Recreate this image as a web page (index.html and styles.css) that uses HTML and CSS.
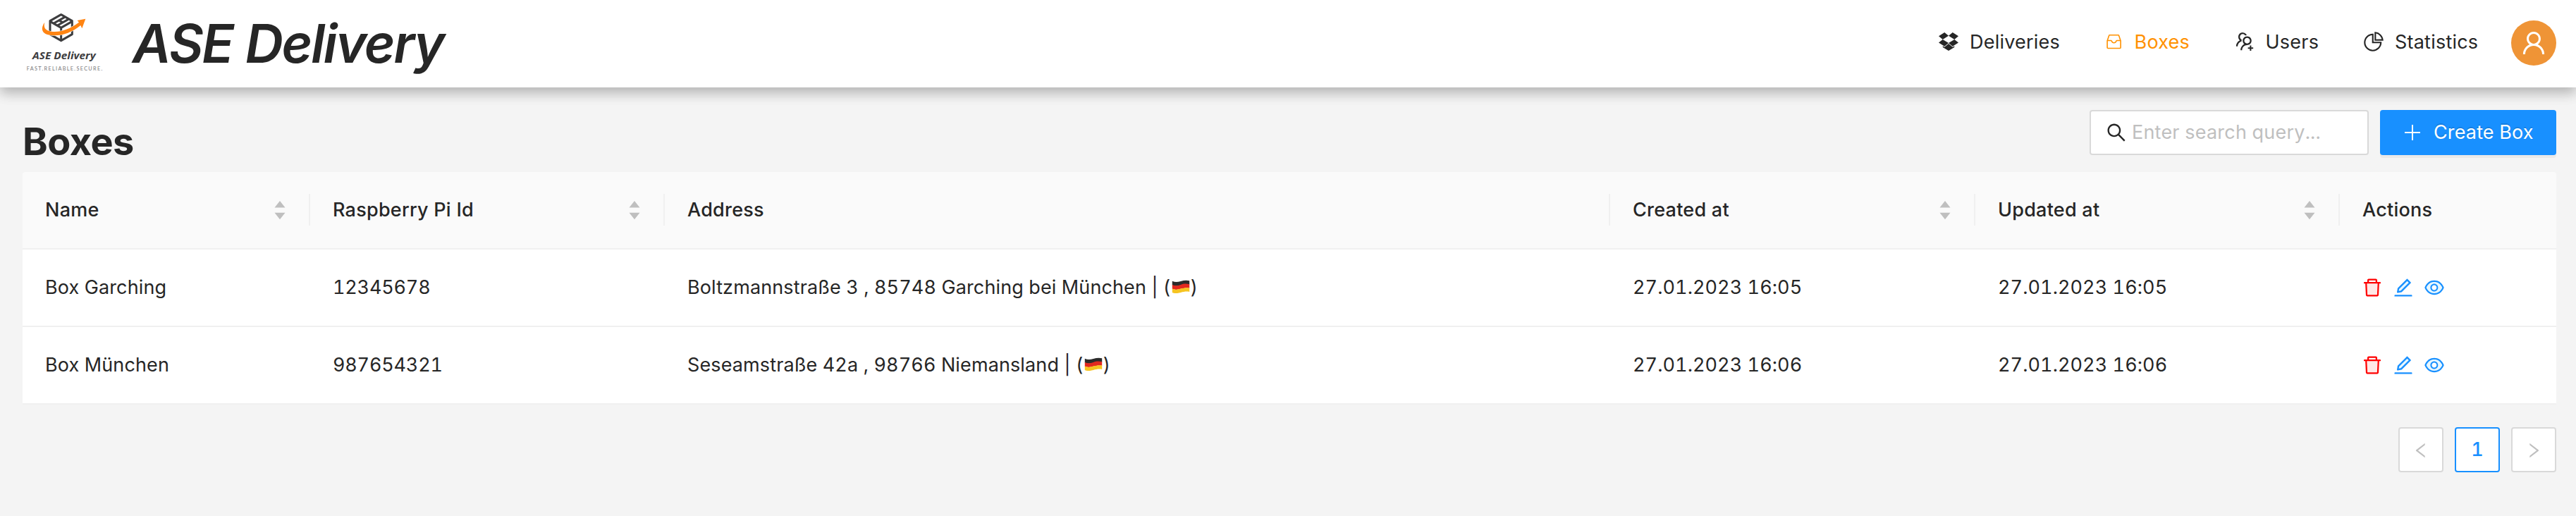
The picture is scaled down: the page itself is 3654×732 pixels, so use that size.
FILE: index.html
```
<!DOCTYPE html>
<html lang="en">
<head>
<meta charset="utf-8">
<title>ASE Delivery</title>
<link rel="stylesheet" href="styles.css">
</head>
<body>
<svg class="sprite" aria-hidden="true">
  <symbol id="i-dropbox" viewBox="64 64 896 896"><path d="M64 556.9l264.2 173.5L512.5 577 246.8 412.7zm896-290.3zm0 0L696.8 95 512.5 248.5l265.2 164.2L512.5 577l184.3 153.4L960 558.8 777.7 412.7zM513 609.8L328.2 763.3l-79.4-51.5v57.8L513 928l263.7-158.4v-57.8l-78.9 51.5zM328.2 95L64 265.1l182.8 147.6 265.7-164.2zM64 556.9z"/></symbol>
  <symbol id="i-inbox" viewBox="0 0 28 28"><path d="M8.500 4.700h12.200c.4 0 .8.3.9.7l2.500 7.400v9.700c0 .6-.4 1-1 1H6.100c-.6 0-1-.4-1-1v-9.700L7.600 5.400c.1-.4.5-.7.9-.7zM5.100 12.500h5.200c.5 0 .8.3 1 .7.500 1.400 1.700 2.500 3.300 2.500s2.800-1.100 3.300-2.500c.2-.4.5-.7 1-.7h5.200" fill="none" stroke="currentColor" stroke-width="1.600"/></symbol>
  <symbol id="i-users" viewBox="64 64 896 896"><path d="M892 772h-80v-80c0-4.400-3.600-8-8-8h-48c-4.400 0-8 3.600-8 8v80h-80c-4.400 0-8 3.600-8 8v48c0 4.400 3.600 8 8 8h80v80c0 4.400 3.600 8 8 8h48c4.400 0 8-3.600 8-8v-80h80c4.400 0 8-3.600 8-8v-48c0-4.400-3.600-8-8-8zM373.500 498.400c-.9-8.700-1.400-17.500-1.400-26.400 0-15.900 1.500-31.400 4.300-46.500.7-3.600-1.200-7.300-4.500-8.800-13.600-6.100-26.100-14.500-36.900-25.100a127.540 127.540 0 01-38.700-95.400c.9-32.100 13.800-62.600 36.300-85.600 24.700-25.300 57.900-39.100 93.200-38.700 31.900.3 62.700 12.600 86 34.400 7.900 7.400 14.700 15.600 20.400 24.400 2 3.100 5.900 4.400 9.300 3.200 17.600-6.100 36.200-10.400 55.300-12.400 5.600-.6 8.800-6.600 6.300-11.600-32.500-64.300-98.900-108.700-175.700-109.900-110.800-1.700-203.300 89.200-203.300 200 0 62.800 28.900 118.800 74.200 155.500-31.800 14.700-61.100 35-86.500 60.400-54.800 54.700-85.800 126.900-87.800 204a8 8 0 008 8.200h56.100c4.300 0 7.900-3.400 8-7.700 1.900-58 25.400-112.300 66.700-153.500 29.400-29.400 65.400-49.800 104.700-59.700 3.900-1 6.500-4.700 6-8.800zM824 472c0-109.400-87.900-198.300-196.900-200C516.300 270.300 424 361.200 424 472c0 62.800 29 118.800 74.200 155.500a300.950 300.950 0 00-86.400 60.400C357 742.600 326 814.800 324 891.800a8 8 0 008 8.200h56c4.300 0 7.900-3.400 8-7.700 1.900-58 25.400-112.300 66.700-153.500C505.800 695.700 563 672 624 672c110.400 0 200-89.500 200-200zm-109.500 90.500C690.300 586.700 658.200 600 624 600s-66.300-13.300-90.500-37.500a127.260 127.260 0 01-37.500-91.800c.3-32.800 13.400-64.500 36.300-88 24-24.600 56.100-38.300 90.400-38.700 33.900-.3 66.800 12.900 91 36.600 24.800 24.300 38.400 56.800 38.400 91.400-.1 34.200-13.400 66.300-37.600 90.500z"/></symbol>
  <symbol id="i-pie" viewBox="64 64 896 896"><path d="M864 518H506V160c0-4.400-3.600-8-8-8h-26a398.460 398.460 0 00-282.800 117.100 398.190 398.190 0 00-85.700 127.100A397.610 397.610 0 0072 552a398.460 398.460 0 00117.100 282.800c36.700 36.700 79.500 65.600 127.100 85.700A397.610 397.610 0 00472 952a398.460 398.460 0 00282.800-117.100c36.700-36.700 65.600-79.500 85.700-127.100A397.610 397.610 0 00872 552v-26c0-4.400-3.600-8-8-8zM705.700 787.800A331.590 331.590 0 01470.400 884c-88.100-.4-170.900-34.900-233.200-97.200C174.500 724.100 140 640.700 140 552c0-88.700 34.500-172.100 97.200-234.800 54.600-54.600 124.900-87.900 200.800-95.500V586h364.300c-7.700 76.300-41.300 147-96.600 201.800zM952 462.400l-2.600-28.200c-8.500-92.100-49.400-179-115.200-244.600A399.400 399.400 0 00589 74.600L560.700 72c-4.700-.4-8.700 3.200-8.700 7.900V464c0 4.400 3.600 8 8 8l384-1c4.700 0 8.400-4 8-8.600zm-332.200-58.200V147.600a332.240 332.240 0 01166.400 89.800c45.700 45.600 77 103.600 90 166.100l-256.400.7z"/></symbol>
  <symbol id="i-user" viewBox="64 64 896 896"><path d="M858.500 763.600a374 374 0 00-80.600-119.500 375.630 375.630 0 00-119.500-80.600c-.4-.2-.8-.3-1.200-.5C719.500 518 760 444.700 760 362c0-137-111-248-248-248S264 225 264 362c0 82.700 40.500 156 102.800 201.100-.4.2-.8.3-1.200.5-44.800 18.900-85 46-119.500 80.600a375.630 375.630 0 00-80.600 119.500A371.700 371.700 0 00136 901.800a8 8 0 008 8.200h60c4.400 0 7.900-3.500 8-7.800 2-77.200 33-149.500 87.800-204.300 56.700-56.700 132-87.900 212.200-87.900s155.500 31.200 212.200 87.900C779 752.700 810 825 812 902.200c.1 4.400 3.600 7.800 8 7.800h60a8 8 0 008-8.200c-1-47.800-10.900-94.300-29.500-138.200zM512 534c-45.900 0-89.100-17.900-121.600-50.400S340 407.900 340 362c0-45.900 17.900-89.100 50.400-121.600S466.100 190 512 190s89.100 17.900 121.600 50.400S684 316.100 684 362c0 45.900-17.900 89.100-50.400 121.600S557.900 534 512 534z"/></symbol>
  <symbol id="i-search" viewBox="64 64 896 896"><path d="M909.600 854.500L649.900 594.800C690.200 542.700 712 479 712 412c0-80.200-31.300-155.400-87.900-212.100-56.600-56.700-132-87.900-212.100-87.900s-155.500 31.300-212.100 87.900C143.200 256.500 112 331.800 112 412c0 80.100 31.300 155.500 87.900 212.100C256.500 680.800 331.800 712 412 712c67 0 130.600-21.800 182.700-62l259.700 259.600a8.200 8.200 0 0011.600 0l43.600-43.500a8.200 8.200 0 000-11.600zM570.400 570.400C528 612.700 471.800 636 412 636s-116-23.300-158.400-65.600C211.300 528 188 471.800 188 412s23.300-116.100 65.600-158.400C296 211.300 352.200 188 412 188s116.100 23.200 158.400 65.600S636 352.200 636 412s-23.300 116.100-65.600 158.400z"/></symbol>
  <symbol id="i-delete" viewBox="64 64 896 896"><path class="tone" d="M292.700 840h438.600l24.200-512h-487z"/><path d="M864 256H736v-80c0-35.300-28.700-64-64-64H352c-35.300 0-64 28.700-64 64v80H160c-17.700 0-32 14.300-32 32v32c0 4.400 3.600 8 8 8h60.400l24.700 523c1.600 34.100 29.800 61 63.900 61h454c34.200 0 62.300-26.800 63.900-61l24.700-523H888c4.400 0 8-3.600 8-8v-32c0-17.700-14.300-32-32-32zm-504-72h304v72H360v-72zm371.300 656H292.700l-24.200-512h487l-24.200 512z"/></symbol>
  <symbol id="i-edit" viewBox="64 64 896 896"><path class="tone" d="M761.100 288.300L687.800 215 325.100 577.600l-15.600 89 88.900-15.700z"/><path d="M880 836H144c-17.700 0-32 14.300-32 32v36c0 4.400 3.600 8 8 8h784c4.400 0 8-3.600 8-8v-36c0-17.700-14.300-32-32-32zm-622.300-84c2 0 4-.2 6-.5L431.900 722c2-.4 3.900-1.300 5.300-2.800l423.900-423.900a9.960 9.960 0 000-14.100L694.900 114.900c-1.900-1.900-4.400-2.900-7.100-2.900s-5.200 1-7.100 2.900L256.800 538.800c-1.500 1.500-2.400 3.300-2.800 5.300l-29.500 168.200a33.500 33.500 0 009.400 29.800c6.600 6.400 14.900 9.900 23.800 9.900zm67.400-174.400L687.800 215l73.300 73.300-362.700 362.600-88.900 15.700 15.600-89z"/></symbol>
  <symbol id="i-eye" viewBox="64 64 896 896"><path class="tone" d="M512 258c-161.300 0-279.400 81.800-362.700 254C232.600 684.200 350.700 766 512 766c161.400 0 279.500-81.800 362.700-254C791.400 339.800 673.300 258 512 258zm-4 430c-97.200 0-176-78.800-176-176s78.800-176 176-176 176 78.800 176 176-78.800 176-176 176z"/><path d="M942.200 486.200C847.400 286.500 704.100 186 512 186c-192.200 0-335.400 100.500-430.200 300.300a60.300 60.300 0 000 51.500C176.600 737.500 319.900 838 512 838c192.200 0 335.400-100.500 430.200-300.300 7.700-16.200 7.700-35 0-51.500zM512 766c-161.300 0-279.400-81.800-362.700-254C232.600 339.800 350.700 258 512 258s279.400 81.800 362.700 254C791.500 684.200 673.400 766 512 766z"/><path d="M508 336c-97.200 0-176 78.800-176 176s78.800 176 176 176 176-78.800 176-176-78.800-176-176-176zm0 288c-61.900 0-112-50.100-112-112s50.100-112 112-112 112 50.100 112 112-50.100 112-112 112z"/></symbol>
  <symbol id="i-sort" viewBox="0 0 22 36"><path d="M11 5l7.500 9.500h-15zM11 31.200l7.500-9.500h-15z"/></symbol>
  <symbol id="i-left" viewBox="64 64 896 896"><path d="M724 218.300V141c0-6.700-7.700-10.400-12.900-6.300L260.300 486.800a31.860 31.860 0 000 50.300l450.800 352.100c5.300 4.100 12.900.4 12.900-6.300v-77.300c0-4.900-2.300-9.600-6.100-12.600l-360-281 360-281.100c3.800-3 6.100-7.700 6.100-12.600z"/></symbol>
  <symbol id="i-flag" viewBox="0 0 26 19"><path d="M.8 1.700c4 1.700 7.500 1.500 12 .2S21.500.3 25.200 1.200v5.600c-4-.9-8-.2-12.400 1S5 9.200.8 7.500z" fill="#2b2b2b"/><path d="M.8 7.100c4.200 1.700 7.600 1.500 12-.2s8.400-1.500 12.400-.7v5.600c-4-.9-8-.2-12.400 1S5 14.500.8 12.800z" fill="#e2291f"/><path d="M.8 12.400c4.200 1.700 7.600 1.500 12 .2s8.400-1.900 12.400-1v5.400c-4-.9-8-.2-12.400 1S5 19.700.8 18z" fill="#f6c421"/></symbol>
</svg>

<header class="topbar">
  <svg class="logo" viewBox="0 0 420 360">
    <path d="M200 62l47 27v57l-47 27-47-27V89z" class="cube"/>
    <path d="M153 91l47 27 47-27M200 118v54M169 99l46-26M185 108l46-26M192 87l14 8" class="cube"/>
    <path d="M130 95C112 120 118 141 144 148C190 158 240 143 283 108L289 121L304 80L269 87L276 95C236 124 196 139 158 134C134 130 124 118 130 95z" class="swoosh"/>
    <text x="78" y="252" class="logo-name" textLength="269" lengthAdjust="spacingAndGlyphs">ASE Delivery</text>
    <text x="53" y="300" class="logo-tag" textLength="323">FAST.RELIABLE.SECURE.</text>
  </svg>
  <h1 class="brand">ASE Delivery</h1>
  <nav class="menu">
    <a class="item"><svg class="ico"><use href="#i-dropbox"/></svg><span>Deliveries</span></a>
    <a class="item active"><svg class="ico"><use href="#i-inbox"/></svg><span>Boxes</span></a>
    <a class="item"><svg class="ico"><use href="#i-users"/></svg><span>Users</span></a>
    <a class="item"><svg class="ico"><use href="#i-pie"/></svg><span>Statistics</span></a>
  </nav>
  <div class="avatar"><svg class="ico-lg"><use href="#i-user"/></svg></div>
</header>

<main class="content">
  <div class="head">
    <h2 class="page-title">Boxes</h2>
    <div class="tools">
      <label class="search"><svg class="ico"><use href="#i-search"/></svg><span class="ph">Enter search query...</span></label>
      <button class="create"><svg class="plus" viewBox="0 0 22 22"><path d="M0 11h22M11 0v22"/></svg><span>Create Box</span></button>
    </div>
  </div>

  <div class="table">
    <div class="row th">
      <div class="cell"><span>Name</span><svg class="sort"><use href="#i-sort"/></svg></div>
      <div class="cell"><span>Raspberry Pi Id</span><svg class="sort"><use href="#i-sort"/></svg></div>
      <div class="cell"><span>Address</span></div>
      <div class="cell"><span>Created at</span><svg class="sort"><use href="#i-sort"/></svg></div>
      <div class="cell"><span>Updated at</span><svg class="sort"><use href="#i-sort"/></svg></div>
      <div class="cell"><span>Actions</span></div>
    </div>
    <div class="row">
      <div class="cell"><span>Box Garching</span></div>
      <div class="cell num"><span>12345678</span></div>
      <div class="cell"><span>Boltzmannstraße 3 , 85748 Garching bei München | (</span><svg class="flag"><use href="#i-flag"/></svg><span>)</span></div>
      <div class="cell date"><span>27.01.2023 16:05</span></div>
      <div class="cell date"><span>27.01.2023 16:05</span></div>
      <div class="cell actions"><svg class="ico del"><use href="#i-delete"/></svg><svg class="ico lnk"><use href="#i-edit"/></svg><svg class="ico lnk"><use href="#i-eye"/></svg></div>
    </div>
    <div class="row">
      <div class="cell"><span>Box München</span></div>
      <div class="cell num"><span>987654321</span></div>
      <div class="cell"><span>Seseamstraße 42a , 98766 Niemansland | (</span><svg class="flag"><use href="#i-flag"/></svg><span>)</span></div>
      <div class="cell date"><span>27.01.2023 16:06</span></div>
      <div class="cell date"><span>27.01.2023 16:06</span></div>
      <div class="cell actions"><svg class="ico del"><use href="#i-delete"/></svg><svg class="ico lnk"><use href="#i-edit"/></svg><svg class="ico lnk"><use href="#i-eye"/></svg></div>
    </div>
  </div>

  <div class="pager">
    <span class="page"><svg class="arrow"><use href="#i-left"/></svg></span>
    <span class="page current">1</span>
    <span class="page"><svg class="arrow next"><use href="#i-left"/></svg></span>
  </div>
</main>
</body>
</html>
```
FILE: styles.css
```
* { box-sizing: border-box; }
body {
  margin: 0;
  min-height: 732px;
  background: #f4f4f4;
  color: #262626;
  font: 400 27px/44px Inter, "Liberation Sans", sans-serif;
  letter-spacing: .22px;
  font-feature-settings: "tnum";
}
.sprite { position: absolute; width: 0; height: 0; }
svg { display: block; flex: none; fill: currentColor; }
.ico { width: 28px; height: 28px; }
.ico-lg { width: 36px; height: 36px; }

.topbar {
  position: relative;
  display: flex;
  align-items: center;
  height: 124px;
  padding: 0 28px 0 20px;
  background: #fff;
  box-shadow: 0 8px 16px rgba(0, 0, 0, .2), 0 8px 20px rgba(0, 0, 0, .08);
}
.logo { width: 140px; height: 120px; margin-bottom: 4px; }
.cube { fill: none; stroke: #3d3d3f; stroke-width: 9; stroke-linejoin: round; }
.swoosh { fill: #ff8412; stroke: #fff; stroke-width: 3; paint-order: stroke; }
.logo-name { font: italic 700 43px "Noto Sans", sans-serif; fill: #3d3d3f; letter-spacing: 0; }
.logo-tag { font: 400 22px Lato, sans-serif; fill: #77777a; }
.brand {
  margin: 0 auto 0 28px;
  font-size: 75px;
  font-style: italic;
  font-weight: 600;
  line-height: 92px;
  letter-spacing: -2.17px;
}
.menu {
  display: grid;
  grid-template-columns: 233.5px 186px 183.5px 209px;
  margin-bottom: 4px;
}
.item { display: flex; align-items: center; gap: 16px; }
.item .ico { margin-bottom: 2px; }
.active { color: #ff9100; }
.avatar {
  display: flex;
  align-items: center;
  justify-content: center;
  width: 64px;
  height: 64px;
  margin-bottom: 2px;
  border-radius: 50%;
  background: #ef9436;
  color: #fff;
}

.content { padding: 32px 28px 0 32px; }
.head { display: flex; justify-content: space-between; height: 88px; }
.page-title {
  margin: 13px 0 0;
  font-size: 54px;
  font-weight: 700;
  line-height: 64px;
  letter-spacing: -.54px;
}
.tools { display: flex; gap: 16px; height: 64px; }
.search {
  display: flex;
  align-items: center;
  gap: 8px;
  width: 396px;
  padding: 0 22px;
  border: 2px solid #d9d9d9;
  border-radius: 4px;
  background: #fff;
}
.ph { color: #bfbfbf; }
.create {
  display: flex;
  align-items: center;
  gap: 19px;
  width: 250px;
  padding: 0 0 0 35px;
  border: 0;
  border-radius: 4px;
  background: #1890ff;
  box-shadow: 0 4px 0 rgba(0, 0, 0, .045);
  color: #fff;
  font: inherit;
  letter-spacing: .14px;
  text-shadow: 0 -2px 0 rgba(0, 0, 0, .12);
}
.plus { width: 22px; height: 22px; stroke: #fff; stroke-width: 2; }

.row {
  display: grid;
  grid-template-columns: 408px 503px 1341px 518px 517px 1fr;
  height: 110px;
  border-bottom: 2px solid #f0f0f0;
  background: #fff;
  letter-spacing: .12px;
}
.cell { position: relative; display: flex; align-items: center; padding: 0 32px; }
.th {
  border-radius: 4px 4px 0 0;
  background: #fafafa;
  font-weight: 500;
  letter-spacing: .24px;
}
.th .cell { justify-content: space-between; }
.th .cell:not(:last-child)::after {
  content: "";
  position: absolute;
  top: 31px;
  right: 0;
  width: 2px;
  height: 45px;
  background: #f0f0f0;
}
.sort { width: 22px; height: 36px; color: #bfbfbf; }
.num { letter-spacing: -.2px; }
.date { letter-spacing: .07px; }
.flag { width: 26px; height: 19px; margin: 0 1px 3px 1px; }
.actions { gap: 16px; }
.del { --tone: #ffe8e6; color: #f00; }
.lnk { --tone: #e6f7ff; color: #1890ff; }
.tone { fill: var(--tone); }

.pager { display: flex; justify-content: flex-end; gap: 16px; margin-top: 32px; }
.page {
  display: flex;
  align-items: center;
  justify-content: center;
  width: 64px;
  height: 64px;
  border: 2px solid #d9d9d9;
  border-radius: 4px;
  background: #fff;
  color: #bfbfbf;
}
.current { border-color: #1890ff; color: #1890ff; font-weight: 500; }
.arrow { width: 24px; height: 24px; margin-top: 2px; }
.next { transform: scaleX(-1); }
```
